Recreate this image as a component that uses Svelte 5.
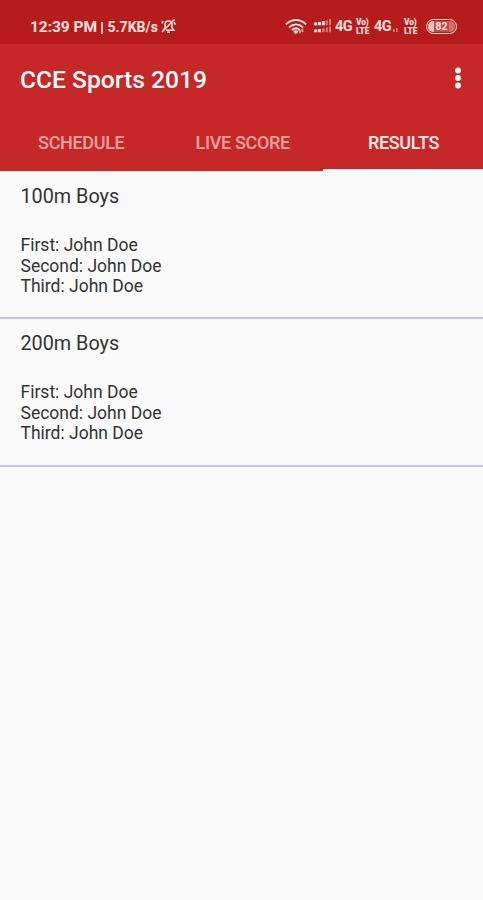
<script>
  const tabs = ['Schedule', 'Live Score', 'Results'];
  const active = 'Results';
  const places = [
    ['First', 'John Doe'],
    ['Second', 'John Doe'],
    ['Third', 'John Doe'],
  ];
  const events = [
    { name: '100m Boys', places },
    { name: '200m Boys', places },
  ];
</script>

<div class="screen">
  <div class="status">
    <span class="clock">12:39 PM</span>
    <span class="pipe"></span>
    <span class="speed">5.7KB/s</span>
    <svg class="bell" width="17" height="17" viewBox="0 0 17 17">
      <path d="M3.2 12.2 5 10V6.6C5 4.6 6.4 3 8.5 3S12 4.6 12 6.6V10l1.8 2.3H6M7 14.2h3M2 14 14.5 1.5M1.8 5.2 3.2 3M14 4.2l1.4 2.4" />
    </svg>
    <div class="right">
      <svg class="wifi" width="22" height="16" viewBox="0 0 22 16">
        <path d="M1 5.4C7-.4 15-.4 21 5.4M4 8.4c4.3-4 9.7-4 14 0M7 11c2.4-2.2 5.4-2.2 7.6 0" />
        <path class="solid" d="M8.3 12.4q2.6-2.1 5.2 0L10.9 15.2z" />
        <path class="dim" d="M15 14.3V11M17.4 13V9.5" />
      </svg>
      <svg class="signal" width="19" height="15" viewBox="0 0 19 15">
        <path d="M1 3.6h3.2v2.6H1zM5 3h3v3.2H5zM8.9 2h3v4.2h-3zM1 10.6h3.2v2.6H1zM5 10h3v3.2H5z" />
        <path class="dim" d="M12.8 1.2h2v5h-2zM16 0h2v6.2h-2zM9 9.4h2.6v3.8H9zM12.8 8.5h2v4.7h-2zM16 7.5h2v5.7h-2z" />
      </svg>
      <span class="net">4G</span>
      <span class="volte"><span>Vo)</span><span>LTE</span></span>
      <span class="net second">4G</span>
      <svg class="mini" width="6" height="5" viewBox="0 0 6 5"><path d="M0 1h1.8v3H0zM3 0h1.6v4H3z" /></svg>
      <span class="volte"><span>Vo)</span><span>LTE</span></span>
      <span class="battery"><span>82</span></span>
    </div>
  </div>

  <header>
    <div class="bar">
      <h1>CCE Sports 2019</h1>
      <svg class="more" width="8" height="22" viewBox="0 0 8 22">
        <circle cx="4" cy="3.5" r="2.9" /><circle cx="4" cy="11" r="2.9" /><circle cx="4" cy="18.5" r="2.9" />
      </svg>
    </div>
    <nav>
      {#each tabs as tab}
        <div class="tab" class:active={tab === active}><span>{tab}</span></div>
      {/each}
    </nav>
  </header>

  <main>
    {#each events as event}
      <section>
        <h2>{event.name}</h2>
        {#each event.places as [place, name]}
          <p>{place}: {name}</p>
        {/each}
      </section>
    {/each}
  </main>
</div>

<style>
  :global(body) { margin: 0; background: #fafafa; }
  .screen {
    height: 900px;
    overflow: hidden;
    background: #fafafa;
    font-family: Roboto, "Liberation Sans", sans-serif;
    display: flex;
    flex-direction: column;
  }
  .status {
    flex: none;
    height: 44px;
    box-sizing: border-box;
    padding: 9px 26px 0 30px;
    background: #b71c1c;
    color: #fde3df;
    display: flex;
    align-items: center;
    white-space: nowrap;
  }
  .clock { font-size: 15.5px; font-weight: 700; width: 68px; letter-spacing: -0.05px; }
  .pipe { width: 1.5px; height: 12px; margin: 2px 5px 0 3px; background: #f6c5c1; }
  .speed { font-size: 14px; font-weight: 700; width: 52px; }
  .bell { fill: none; stroke: #fde3df; stroke-width: 1.6; }
  .right { margin-left: auto; display: flex; align-items: center; }
  .wifi { fill: none; stroke: #fde3df; stroke-width: 1.9; }
  .solid { fill: #fde3df; stroke: none; }
  .wifi .dim { stroke: #e99a95; }
  .signal { margin-left: 6px; fill: #fde3df; }
  .signal .dim { fill: #d87672; }
  .net { margin-left: 3px; width: 19px; font-size: 14.5px; font-weight: 700; letter-spacing: -0.5px; }
  .volte {
    width: 16px;
    margin-left: 2px;
    display: flex;
    flex-direction: column;
    font-size: 8.3px;
    font-weight: 900;
    line-height: 8.3px;
    letter-spacing: -0.1px;
  }
  .net.second { margin-left: 2px; }
  .mini { fill: #d87672; margin: 7px 3px 0 0; }
  .battery {
    width: 31px;
    height: 15px;
    box-sizing: border-box;
    margin-left: 6px;
    padding: 1px;
    border: 1.5px solid #fde3df;
    border-radius: 8px;
    display: flex;
  }
  .battery span {
    flex: 1;
    border-radius: 5px;
    background: linear-gradient(90deg, #f5bdb8 0 22%, #c74b48 22% 78%, #d5706d 78%);
    font-size: 10.5px;
    font-weight: 700;
    line-height: 11px;
    text-align: center;
  }
  header { flex: none; height: 127px; background: #c62828; display: flex; flex-direction: column; }
  .bar { height: 72px; display: flex; align-items: center; justify-content: space-between; padding: 0 21px 0 20px; }
  h1 { margin: -2px 0 0; color: #fff; font-size: 24.6px; font-weight: 500; white-space: nowrap; }
  .more { fill: #fff; margin-top: -4px; }
  nav { height: 55px; display: grid; grid-template-columns: 161.5px 161.5px 1fr; }
  .tab {
    display: flex;
    align-items: center;
    justify-content: center;
    border-bottom: 2px solid #c62828;
    color: #efa3a1;
    font-size: 18px;
    font-weight: 500;
    letter-spacing: -0.33px;
    text-indent: 1px;
    text-transform: uppercase;
    white-space: nowrap;
  }
  .tab.active { color: #fff0ee; border-color: #fff; }
  section {
    height: 147px;
    box-sizing: border-box;
    padding: 12px 20px 0 20.5px;
    border-bottom: 2px solid #bcc6ed;
    color: #333;
  }
  section + section { height: 147.5px; }
  main { padding-top: 1px; }
  h2 { margin: 0 0 25px; font-size: 19.8px; font-weight: 400; line-height: 26px; }
  p { margin: 0; font-size: 17.5px; line-height: 20.7px; }
</style>
